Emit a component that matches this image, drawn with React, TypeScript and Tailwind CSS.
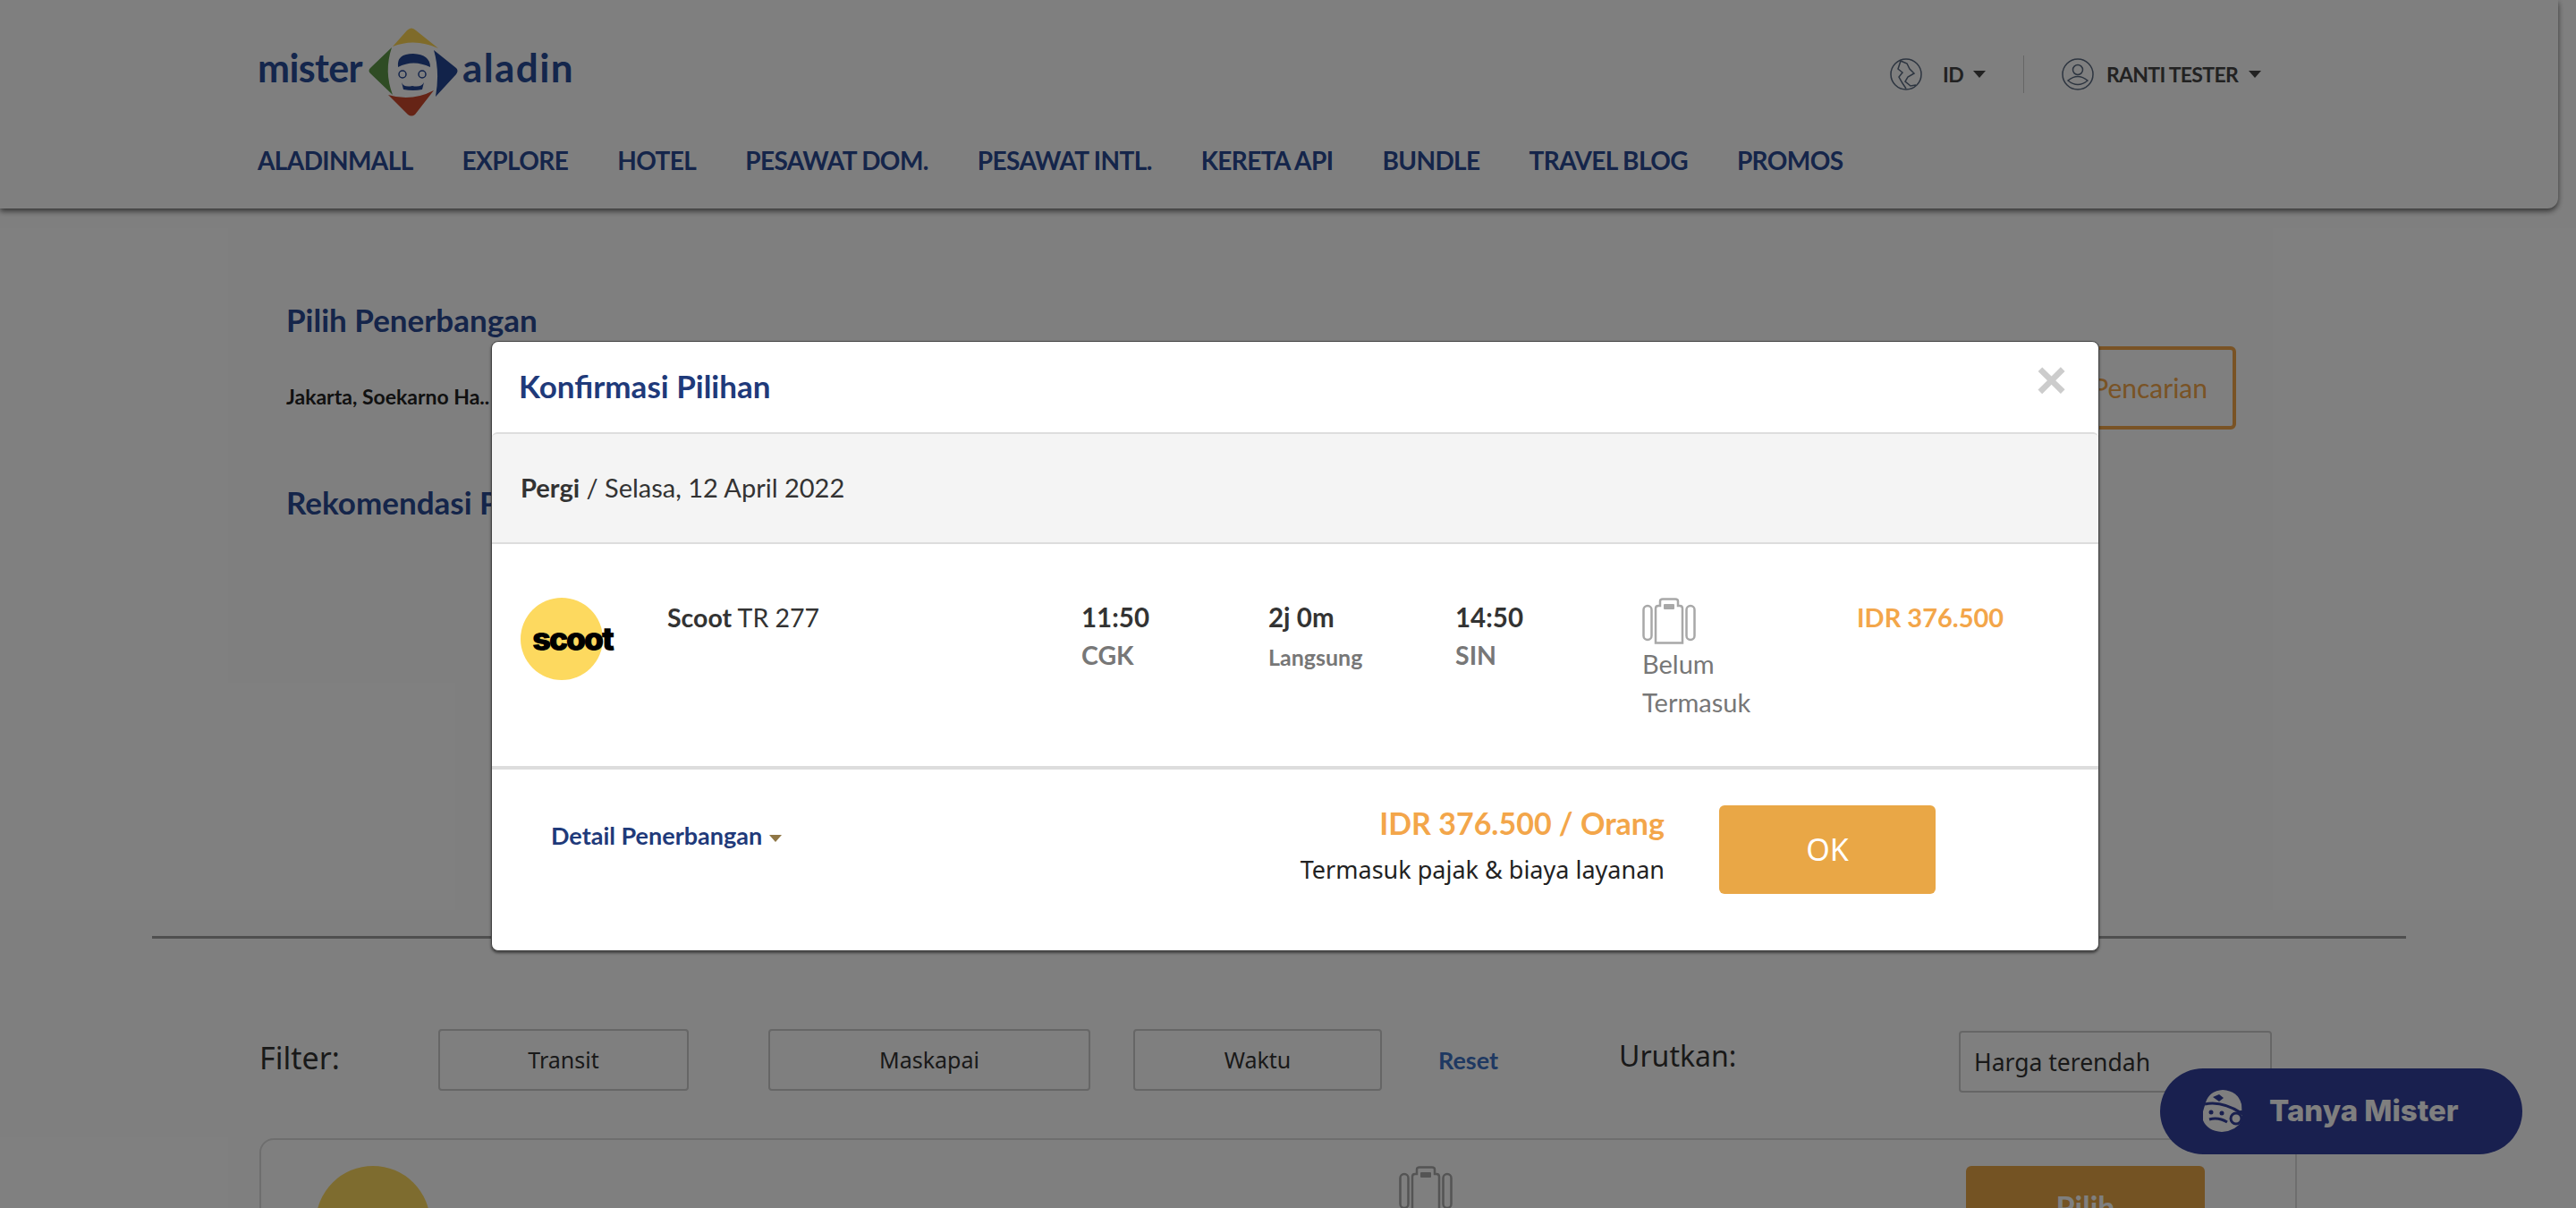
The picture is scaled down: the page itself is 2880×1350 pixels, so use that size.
const navItems = ["ALADINMALL", "EXPLORE", "HOTEL", "PESAWAT DOM.", "PESAWAT INTL.", "KERETA API", "BUNDLE", "TRAVEL BLOG", "PROMOS"];

function Caret({ className }: { className: string }) {
  return <span className={`inline-block h-0 w-0 border-x-[7px] border-t-[8px] border-x-transparent ${className}`} />;
}

function LogoMark() {
  return (
    <svg width="100" height="100" viewBox="0 0 100 100" className="overflow-visible">
      <path d="M27 22 L43 4 Q48 -1 53 4 L78 24 Q52 12 27 22 Z" fill="#ffd754" />
      <path d="M26 23 L2 46 Q-1 49 2 52 L27 76 Q17 50 26 23 Z" fill="#5e9848" />
      <path d="M73 26 L98 46 Q101 49 98 53 L75 78 Q80 50 73 26 Z" fill="#244694" />
      <path d="M22 76 L44 98 Q48 101 52 98 L73 71 Q48 84 22 76 Z" fill="#cc482c" />
      <path d="M33 45 Q31 30 50 30 Q69 31 69 45 Q50 36 33 45 Z" fill="#244694" />
      <circle cx="38" cy="53" r="4" fill="none" stroke="#244694" strokeWidth="1.5" />
      <circle cx="60" cy="53" r="4" fill="none" stroke="#244694" strokeWidth="1.5" />
      <path d="M37 62 Q39 68 49 66 Q59 68 62 62 L60 70 Q50 72 39 70 Z" fill="#244694" />
    </svg>
  );
}

function GlobeIcon() {
  return (
    <svg width="36" height="36" viewBox="0 0 36 36" fill="none" stroke="#5a6a80" strokeWidth="1.5">
      <circle cx="18" cy="18" r="17" />
      <path d="M12 3 L19 6 L22 12 L27 17 L20 21 L17 26 L23 31 L29 30 M12 3 L9 12 L14 16 L10 21 L14 28 L18 34" />
    </svg>
  );
}

function UserIcon() {
  return (
    <svg width="36" height="36" viewBox="0 0 36 36" fill="none" stroke="#5a6a80" strokeWidth="1.5">
      <circle cx="18" cy="18" r="17" />
      <circle cx="18" cy="13" r="5.5" />
      <path d="M7 25 Q18 16 29 25 Q18 34 7 25 Z" />
    </svg>
  );
}

function BagIcon({ color }: { color: string }) {
  return (
    <svg width="60" height="52" viewBox="0 0 60 52" fill="none" stroke={color} strokeWidth="2.5">
      <rect x="1.5" y="9" width="9" height="38" rx="4.5" />
      <rect x="49.5" y="9" width="9" height="38" rx="4.5" />
      <path d="M15 50.5 V12 Q15 9 18 9 H20 V4 Q20 1.5 23 1.5 H37 Q40 1.5 40 4 V9 H42 Q45 9 45 12 V50.5 Z" />
      <rect x="24" y="7" width="12" height="6" rx="1" fill={color} stroke="none" />
    </svg>
  );
}

function MisterFace() {
  return (
    <svg width="46" height="48" viewBox="0 0 46 48">
      <path d="M4 14 Q8 1 23 0 Q40 1 44 16 L45 34 Q38 46 22 47 Q6 46 1 34 L1 24 Z" fill="#ffffff" />
      <path d="M12 8 L19 5 L24 9 L19 13 Z" fill="#32409e" />
      <path d="M3 16 Q22 12 44 26 L44 23" stroke="#32409e" strokeWidth="3" fill="none" />
      <circle cx="10" cy="25" r="2.5" fill="#32409e" />
      <circle cx="22" cy="26" r="2.5" fill="#32409e" />
      <path d="M8 33 Q18 30 28 36" stroke="#32409e" strokeWidth="3" fill="none" />
      <circle cx="38" cy="32" r="6" fill="#ffffff" stroke="#32409e" strokeWidth="3" />
    </svg>
  );
}

function FlightRow() {
  return (
    <div className="grid h-[248px] grid-cols-[164px_463px_209px_209px_209px_240px_1fr] rounded-b-md pl-[32px] pt-[60px] text-[28.5px] leading-[42px] text-[#333]">
      <div className="flex h-[92px] w-[92px] items-center rounded-full bg-[#fdd95f] pl-[13px]">
        <span className="font-['Inter',sans-serif] text-[36px] font-black leading-none tracking-[-2.5px] text-black">scoot</span>
      </div>
      <div className="pt-px"><b>Scoot</b> TR 277</div>
      <div className="pt-px">
        <div className="text-[29.5px] font-bold">11:50</div>
        <div className="font-bold text-[#777]">CGK</div>
      </div>
      <div className="pt-px">
        <div className="text-[29.5px] font-bold">2j 0m</div>
        <div className="pt-0.5 text-[25px] font-bold text-[#777]">Langsung</div>
      </div>
      <div className="pt-px">
        <div className="text-[29.5px] font-bold">14:50</div>
        <div className="font-bold text-[#777]">SIN</div>
      </div>
      <div className="text-[29px] text-[#777]">
        <BagIcon color="#a8a8a8" />
        <div className="leading-[43px]">Belum</div>
        <div className="leading-[43px]">Termasuk</div>
      </div>
      <div className="pt-px text-[29px] font-bold text-[#f3a64a]">IDR 376.500</div>
    </div>
  );
}

function ConfirmModal() {
  return (
    <div className="absolute left-[549px] top-[381px] h-[682px] w-[1798px] rounded-lg border border-[#444] bg-white shadow-[0_2px_3px_rgba(0,0,0,0.5)]">
      <div className="relative h-[101px] pl-[30px] pt-[26px] text-[35px] font-bold leading-[46px] text-[#1f3a7a]">
        Konfirmasi Pilihan
        <span className="absolute right-[35px] top-[13px] font-['Liberation_Sans',sans-serif] text-[60px] font-bold leading-[60px] text-[#ccc]">×</span>
      </div>
      <div className="flex h-[125px] items-center rounded-t-md border-y-2 border-[#ddd] bg-[#f4f4f4] pb-[2px] pl-[32px] text-[29px] text-[#333]">
        <span><b>Pergi</b> / Selasa, 12 April 2022</span>
      </div>
      <FlightRow />
      <div className="flex border-t-4 border-[#ddd] pr-[182px] pt-[40px]">
        <div className="flex-1 pl-[66px] pt-[14px] text-[27px] font-bold leading-[40px] text-[#1f3a7a]">
          Detail Penerbangan
          <Caret className="ml-2 align-middle border-t-[#8f7645]" />
        </div>
        <div className="text-right">
          <div className="text-[34px] font-bold leading-[40px] text-[#f3a64a]">IDR 376.500 / Orang</div>
          <div className="mt-3 font-['Noto_Sans',sans-serif] text-[27px] leading-[40px] text-[#222]">Termasuk pajak &amp; biaya layanan</div>
        </div>
        <button className="ml-[61px] h-[99px] w-[242px] rounded-md bg-[#e9a746] font-['Noto_Sans',sans-serif] text-[34px] text-white">OK</button>
      </div>
    </div>
  );
}

function FilterBox({ label, className }: { label: string; className: string }) {
  return (
    <div className={`flex h-[69px] items-center justify-center rounded border-2 border-[#ccc] text-[25px] ${className}`}>{label}</div>
  );
}

export default function App() {
  return (
    <div className="relative h-[1350px] w-[2880px] overflow-hidden bg-white font-['Lato',sans-serif]">
      <header className="h-[233px] w-[2860px] rounded-br-xl bg-white pl-[288px] pr-[332px] pt-[30px] shadow-[0_3px_6px_rgba(0,0,0,0.6)]">
        <div className="flex h-[100px] items-center justify-between">
          <div className="flex items-center text-[#284c98]">
            <span className="w-[124px] pb-[10px] text-[43px] font-bold leading-none tracking-[-0.6px]">mister</span>
            <LogoMark />
            <span className="ml-[5px] pb-[10px] text-[44px] font-bold leading-none tracking-[1.4px]">aladin</span>
          </div>
          <div className="flex items-center pt-[6px] text-[23px] font-bold tracking-[-0.7px] text-[#444]">
            <GlobeIcon />
            <span className="ml-[23px]">ID</span>
            <Caret className="ml-[11px] border-t-[#444]" />
            <div className="mx-[42px] h-[42px] w-px bg-[#ccc]" />
            <UserIcon />
            <span className="ml-[14px]">RANTI TESTER</span>
            <Caret className="ml-3 border-t-[#444]" />
          </div>
        </div>
        <nav className="mt-[32px] flex gap-[55px] text-[28px] font-bold leading-[34px] tracking-[-0.6px] text-[#2a4a94]">
          {navItems.map((item) => (
            <a key={item}>{item}</a>
          ))}
        </nav>
      </header>

      <section className="ml-[320px] mr-[380px] mt-[104px] flex items-start justify-between">
        <div>
          <h2 className="text-[35px] font-bold leading-[40px] text-[#2a4a94]">Pilih Penerbangan</h2>
          <p className="mt-[51px] text-[23px] font-bold leading-[30px] text-[#222]">Jakarta, Soekarno Ha..</p>
          <h2 className="mt-[83px] text-[35px] font-bold leading-[40px] text-[#2a4a94]">Rekomendasi Penerbangan</h2>
        </div>
        <button className="mt-[50px] flex h-[93px] w-[320px] items-center justify-end rounded-md border-4 border-[#f3a64a] pr-[28px] text-[30px] text-[#f3a64a]">
          Ubah Pencarian
        </button>
      </section>

      <hr className="ml-[170px] mt-[465px] w-[2520px] border-t-[3px] border-[#9f9f9f]" />

      <div className="ml-[290px] mt-[101px] flex items-start font-['Noto_Sans',sans-serif] text-[#333]">
        <span className="w-[200px] text-[34px] leading-[64px]">Filter:</span>
        <FilterBox label="Transit" className="w-[280px]" />
        <FilterBox label="Maskapai" className="ml-[89px] w-[360px]" />
        <FilterBox label="Waktu" className="ml-[48px] w-[278px]" />
        <span className="ml-[63px] w-[202px] font-['Lato',sans-serif] text-[27px] font-bold leading-[70px] text-[#3f73c4]">Reset</span>
        <span className="w-[380px] text-[32px] leading-[60px]">Urutkan:</span>
        <div className="mt-0.5 flex h-[69px] w-[350px] items-center rounded border-2 border-[#ccc] pl-[15px] pt-[2px] text-[26.5px]">Harga terendah</div>
      </div>

      <div className="ml-[290px] mt-[51px] flex h-[200px] w-[2278px] items-start rounded-t-2xl border-2 border-[#ddd] pt-[29px]">
        <div className="ml-[61px] flex h-[128px] w-[128px] items-center rounded-full bg-[#fdd95f] pl-[18px]">
          <span className="font-['Inter',sans-serif] text-[50px] font-black leading-none tracking-[-3px] text-black">scoot</span>
        </div>
        <div className="ml-[1083px]">
          <BagIcon color="#a8a8a8" />
        </div>
        <button className="ml-[574px] h-[90px] w-[267px] rounded-md bg-[#e9a746] text-[34px] font-bold text-white">Pilih</button>
      </div>

      <div className="absolute left-[2415px] top-[1194px] flex h-[96px] w-[405px] items-center rounded-full bg-[#32409e] pl-[47px]">
        <MisterFace />
        <span className="ml-[29px] font-['Inter',sans-serif] text-[33px] font-extrabold text-white">Tanya Mister</span>
      </div>

      <div className="absolute inset-0 bg-black/50" />
      <ConfirmModal />
    </div>
  );
}
